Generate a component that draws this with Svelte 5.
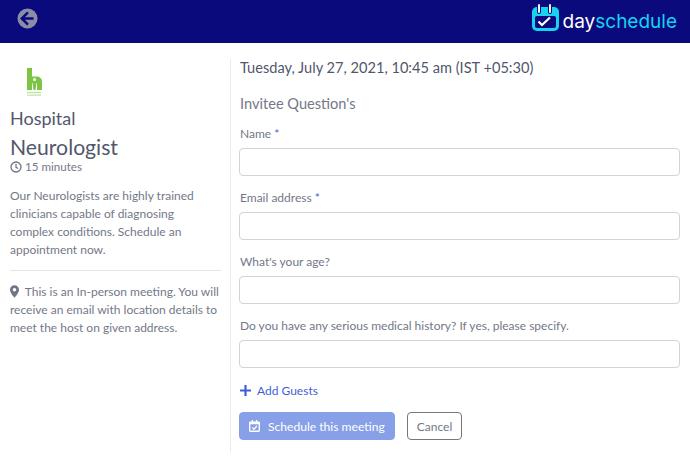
<script>
  const questions = [
    { label: 'Name', required: true },
    { label: 'Email address', required: true },
    { label: "What's your age?", required: false },
    { label: 'Do you have any serious medical history? If yes, please specify.', required: false },
  ];
</script>

<header class="topbar">
  <button class="back" aria-label="Back">
    <svg viewBox="0 0 22 22" width="21" height="21">
      <circle cx="11" cy="11" r="10.5" fill="#8b8da6" />
      <path d="M11.5 4.6 5 11l6.5 6.4M5.4 11H17.4" fill="none" stroke="#0a0a7d" stroke-width="2.6" />
    </svg>
  </button>
  <div class="logo">
    <svg viewBox="0 0 27 27" width="27" height="27">
      <rect x="0" y="3" width="27" height="24" rx="5" fill="#16d3ee" />
      <rect x="3" y="12" width="21" height="12" rx="2" fill="#0a0a7d" />
      <path d="M7 1v7M18 1v7" stroke="#0a0a7d" stroke-width="4" stroke-linecap="round" />
      <path d="M7 1v7M18 1v7" stroke="#e8f4fb" stroke-width="2" stroke-linecap="round" />
      <path d="M6.500 17.500l3.500 3.500 8-7.500" fill="none" stroke="#fff" stroke-width="2.200" />
    </svg>
    <span class="wordmark"><span class="day">day</span><span class="sched">schedule</span></span>
  </div>
</header>

<main class="page">
  <aside class="side">
    <svg class="org" viewBox="0 0 16 30" width="16" height="30">
      <path d="M0 0h5v8.500h5a5 5 0 0 1 5 5V22H10v-7H9.500L8.500 22h-2L5.500 15H5v7H0z" fill="#7cc544" />
      <circle cx="7.500" cy="11.500" r="1.500" fill="#fff" />
      <rect x="0" y="24" width="14" height="1.200" fill="#bfe3a2" />
      <rect x="0" y="26.500" width="14" height="1.200" fill="#bfe3a2" />
    </svg>
    <div class="org-name">Hospital</div>
    <h1 class="event">Neurologist</h1>
    <div class="duration">
      <svg viewBox="0 0 12 12" width="12" height="12">
        <circle cx="6" cy="6" r="5" fill="none" stroke="#6f7486" stroke-width="1.300" />
        <path d="M6 2.800V6.300l2.200 1.300" fill="none" stroke="#6f7486" stroke-width="1.200" />
      </svg>
      15 minutes
    </div>
    <p class="about">Our Neurologists are highly trained clinicians capable of diagnosing complex conditions. Schedule an appointment now.</p>
    <hr />
    <p class="note">
      <svg viewBox="0 0 10 14" width="9" height="13">
        <path fill-rule="evenodd" d="M5 0a5 5 0 0 1 5 5c0 3-3.500 7-5 9-1.500-2-5-6-5-9a5 5 0 0 1 5-5zm0 3a2 2 0 1 0 0 4 2 2 0 0 0 0-4z" fill="#6f7486" />
      </svg>
      &nbsp;This is an In-person meeting. You will receive an email with location details to meet the host on given address.
    </p>
  </aside>

  <section class="form">
    <div class="when">Tuesday, July 27, 2021, 10:45 am (IST +05:30)</div>
    <h2>Invitee Question's</h2>
    {#each questions as q}
      <label class="field">
        <span class="lab">{q.label}{#if q.required}&nbsp;<span class="star">*</span>{/if}</span>
        <input type="text" />
      </label>
    {/each}
    <div class="guests">
      <svg viewBox="0 0 11 11" width="11" height="11"><path d="M5.500 0v11M0 5.500h11" stroke="#3f5fd8" stroke-width="2.200" /></svg>
      Add Guests
    </div>
    <div class="actions">
      <button class="primary">
        <svg viewBox="0 0 12 13" width="11" height="12">
          <path fill-rule="evenodd" d="M1.500 1.500H3V0h1.500v1.500h3V0H9v1.500h1.500A1.500 1.500 0 0 1 12 3v8.500a1.500 1.500 0 0 1-1.500 1.500h-9A1.500 1.500 0 0 1 0 11.500V3a1.500 1.500 0 0 1 1.500-1.500zM1.500 4.500v7h9v-7z" fill="#fff" />
          <path d="M3.500 8l2 2 3-3.500" fill="none" stroke="#fff" stroke-width="1.400" />
        </svg>
        <span>Schedule this meeting</span>
      </button>
      <button class="cancel">Cancel</button>
    </div>
  </section>
</main>

<style>
  :global(body) {
    font-family: "Lato", "Open Sans", sans-serif;
    background: #fff;
    color: #737889;
    overflow: hidden;
  }

  .topbar {
    height: 43px;
    background: #0a0a7d;
    display: flex;
    align-items: center;
    justify-content: space-between;
    padding: 0 13px 0 17px;
  }

  .back {
    padding: 0;
    border: 0;
    background: none;
    display: flex;
    margin-bottom: 6px;
  }

  .logo {
    display: flex;
    align-items: center;
    gap: 4px;
    margin-bottom: 8px;
  }

  .wordmark {
    font-family: "Inter", sans-serif;
    font-size: 19px;
    margin-top: 8px;
  }

  .day { color: #fff; }
  .sched { color: #16d3ee; }

  .page {
    display: flex;
    padding-top: 16px;
  }

  .side {
    box-sizing: border-box;
    width: 231px;
    height: 393px;
    padding: 9px 9px 0 10px;
    border-right: 1px solid #e9ecef;
    flex-shrink: 0;
  }

  .org {
    display: block;
    margin: 0 0 0 17px;
  }

  .org-name {
    font-size: 18px;
    line-height: 22px;
    color: #52576c;
    margin-top: 9px;
  }

  .event {
    font-size: 21.200px;
    font-weight: 400;
    line-height: 24px;
    color: #52576c;
    margin: 6px 0 0;
  }

  .duration {
    font-size: 11.600px;
    line-height: 16px;
    display: flex;
    align-items: center;
    gap: 3px;
  }

  .about {
    font-size: 12px;
    line-height: 18px;
    margin: 12px 0 0;
  }

  hr {
    border: 0;
    border-top: 1px solid #e2e4e8;
    margin: 11px 0 12px;
  }

  .note {
    font-size: 12px;
    line-height: 18px;
    margin: 0;
  }

  .note svg {
    vertical-align: -2px;
  }

  .form {
    flex: 1;
    padding: 0 10px 0 8px;
  }

  .when {
    font-size: 14.600px;
    line-height: 18px;
    color: #52576c;
    padding-left: 1px;
  }

  h2 {
    font-size: 14.600px;
    font-weight: 400;
    line-height: 16px;
    color: #737889;
    margin: 19px 0 0;
    padding-left: 1px;
  }

  .field {
    display: block;
    margin-top: 13px;
  }

  .lab {
    display: block;
    font-size: 12px;
    line-height: 17px;
    margin-bottom: 6px;
    padding-left: 1px;
  }

  .star { color: #3f5fd8; }

  input {
    display: block;
    box-sizing: border-box;
    width: 100%;
    height: 28px;
    border: 1px solid #ced4da;
    border-radius: 4px;
    background: #fff;
  }

  .guests {
    display: flex;
    align-items: center;
    gap: 6px;
    margin-top: 14px;
    padding-left: 1px;
    font-size: 12px;
    line-height: 17px;
    color: #3f5fd8;
  }

  .actions {
    display: flex;
    gap: 12px;
    margin-top: 13px;
  }

  button {
    font-family: inherit;
  }

  .primary {
    height: 28px;
    width: 156px;
    padding: 0 0 0 9px;
    display: flex;
    align-items: center;
    gap: 8px;
    background: #87a0e8;
    border: 1px solid #87a0e8;
    border-radius: 4px;
    color: #fff;
    font-size: 12.100px;
    white-space: nowrap;
  }

  .cancel {
    height: 28px;
    width: 55px;
    padding: 0;
    background: #fff;
    border: 1px solid #777;
    border-radius: 4px;
    color: #737889;
    font-size: 12px;
  }
</style>
